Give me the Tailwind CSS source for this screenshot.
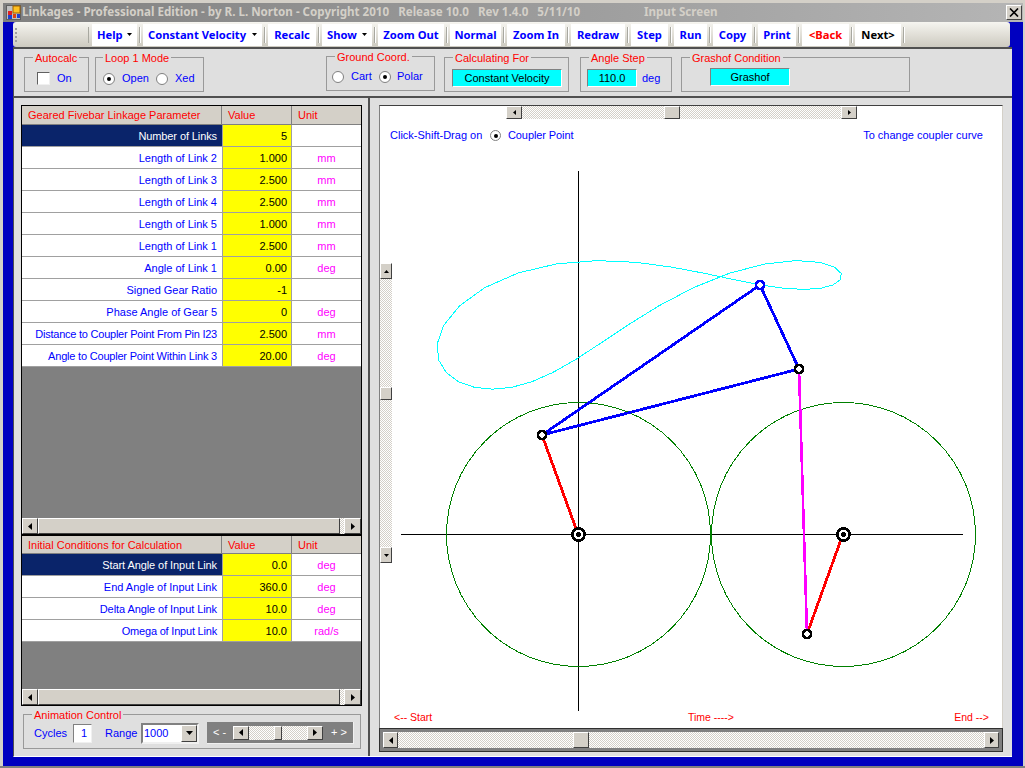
<!DOCTYPE html>
<html>
<head>
<meta charset="utf-8">
<script src="https://cdn.jsdelivr.net/npm/@tailwindcss/browser@4"></script>
</head>
<body class="m-0">
<div class="w-[1025px] h-[768px] overflow-hidden bg-[#d4d0c8] pt-[3px] pl-[3px] pr-[2px] flex flex-col font-['Liberation_Sans',sans-serif] text-[11px] leading-[13px] border-b-2 border-[#808080]">
  <!-- title bar -->
  <div class="h-[19px] shrink-0 flex items-center bg-gradient-to-r from-[#808080] to-[#b5b5b5] text-[#d4d0c8] font-['Noto_Sans',sans-serif] font-bold text-[11.6px] relative">
    <svg class="ml-[3px] mr-[1px]" width="15" height="15" viewBox="0 0 15 15"><rect x="0.5" y="0.5" width="14" height="14" fill="#c0c0c0" stroke="#606060"/><rect x="7" y="1" width="7" height="7" fill="#ffc020" stroke="#a06000"/><rect x="2" y="6" width="4" height="4" fill="#e02020"/><rect x="2" y="10" width="4" height="4" fill="#2040d0"/><rect x="7" y="9" width="3" height="4" fill="#e04010"/><rect x="11" y="9" width="3" height="4" fill="#2040d0"/></svg>
    <span class="whitespace-pre w-[622px] pb-[2px]">Linkages - Professional Edition - by R. L. Norton - Copyright 2010   Release 10.0   Rev 1.4.0   5/11/10</span>
    <span class="whitespace-pre pb-[2px]">Input Screen</span>
    <div class="ml-auto mr-[1px] w-[16px] h-[15px] bg-[#d4d0c8] border border-t-white border-l-white border-r-[#404040] border-b-[#404040] flex items-center justify-center">
      <svg width="10" height="9" viewBox="0 0 10 9"><path d="M1 0.5 L9 8.5 M9 0.5 L1 8.5" stroke="#000" stroke-width="1.6"/></svg>
    </div>
  </div>
  <!-- blue frame -->
  <div class="flex-1 bg-[#0000c0] pl-[10px] pr-[11px] pb-[9px] flex flex-col min-h-0">
    <!-- toolbar -->
    <div class="h-[25px] shrink-0 rounded-[3px] bg-gradient-to-b from-[#f6f5f0] to-[#cdcac0] flex items-center font-['Noto_Sans',sans-serif] font-bold text-[11.2px] text-[#0000ff] mr-[2px] whitespace-nowrap">
      <div class="w-[2px] h-[14px] ml-[2px] bg-[repeating-linear-gradient(#a0a0a0_0_2px,transparent_2px_4px)]"></div>
      <div class="w-[71px]"></div>
      <div class="w-[1px] h-[16px] bg-[#a8a8a0] mr-[3px]"></div>
      <div class="w-[45px] h-[22px] bg-white flex items-center pl-[5px]">Help<svg class="ml-auto mr-[5px]" width="5" height="3"><path d="M0 0H5L2.5 3Z" fill="#000"/></svg></div>
      <div class="w-[2px] h-[16px] mx-[2px] bg-[#a8a8a0] border-r border-white"></div>
      <div class="w-[119px] h-[22px] bg-white flex items-center pl-[5px]">Constant Velocity<svg class="ml-auto mr-[5px]" width="5" height="3"><path d="M0 0H5L2.5 3Z" fill="#000"/></svg></div>
      <div class="w-[2px] h-[16px] mx-[2px] bg-[#a8a8a0] border-r border-white"></div>
      <div class="w-[48px] h-[22px] bg-white flex items-center justify-center">Recalc</div>
      <div class="w-[2px] h-[16px] mx-[2px] bg-[#a8a8a0] border-r border-white"></div>
      <div class="w-[50px] h-[22px] bg-white flex items-center pl-[5px]">Show<svg class="ml-auto mr-[5px]" width="5" height="3"><path d="M0 0H5L2.5 3Z" fill="#000"/></svg></div>
      <div class="w-[2px] h-[16px] mx-[2px] bg-[#a8a8a0] border-r border-white"></div>
      <div class="w-[66px] h-[22px] bg-white flex items-center justify-center">Zoom Out</div>
      <div class="w-[2px] h-[16px] mx-[2px] bg-[#a8a8a0] border-r border-white"></div>
      <div class="w-[51px] h-[22px] bg-white flex items-center justify-center">Normal</div>
      <div class="w-[2px] h-[16px] mx-[2px] bg-[#a8a8a0] border-r border-white"></div>
      <div class="w-[58px] h-[22px] bg-white flex items-center justify-center">Zoom In</div>
      <div class="w-[2px] h-[16px] mx-[2px] bg-[#a8a8a0] border-r border-white"></div>
      <div class="w-[54px] h-[22px] bg-white flex items-center justify-center">Redraw</div>
      <div class="w-[2px] h-[16px] mx-[2px] bg-[#a8a8a0] border-r border-white"></div>
      <div class="w-[37px] h-[22px] bg-white flex items-center justify-center">Step</div>
      <div class="w-[2px] h-[16px] mx-[2px] bg-[#a8a8a0] border-r border-white"></div>
      <div class="w-[33px] h-[22px] bg-white flex items-center justify-center">Run</div>
      <div class="w-[2px] h-[16px] mx-[2px] bg-[#a8a8a0] border-r border-white"></div>
      <div class="w-[39px] h-[22px] bg-white flex items-center justify-center">Copy</div>
      <div class="w-[2px] h-[16px] mx-[2px] bg-[#a8a8a0] border-r border-white"></div>
      <div class="w-[38px] h-[22px] bg-white flex items-center justify-center">Print</div>
      <div class="w-[2px] h-[16px] mx-[2px] bg-[#a8a8a0] border-r border-white"></div>
      <div class="w-[47px] h-[22px] bg-white flex items-center justify-center text-[#ff0000]">&lt;Back</div>
      <div class="w-[2px] h-[16px] mx-[2px] bg-[#a8a8a0] border-r border-white"></div>
      <div class="w-[46px] h-[22px] bg-white flex items-center justify-center text-black">Next&gt;</div>
      <div class="w-[2px] h-[16px] mx-[2px] bg-[#a8a8a0] border-r border-white"></div>
    </div>
    <!-- content -->
    <div class="flex-1 min-h-0 bg-[#dfdfdf] border-t-2 border-t-[#505050] border-l border-l-[#505050] border-b border-b-white flex flex-col">
      <!-- control row -->
      <div class="h-[49px] shrink-0 border-b-2 border-b-[#505050] pt-[2px] pl-[10px] flex items-start text-[#0000ff]">
        <fieldset class="w-[65px] h-[41px] border border-[#999999]">
          <legend class="ml-[8px] px-[2px] text-[#ff0000] translate-y-[1px]">Autocalc</legend>
          <div class="flex items-center pl-[12px] pt-[8px]">
            <span class="w-[13px] h-[13px] bg-white border border-t-[#606060] border-l-[#606060] border-r-[#f0f0f0] border-b-[#f0f0f0]"></span>
            <span class="ml-[7px]">On</span>
          </div>
        </fieldset>
        <fieldset class="ml-[6px] w-[109px] h-[41px] border border-[#999999]">
          <legend class="ml-[7px] px-[2px] text-[#ff0000] translate-y-[1px]">Loop 1 Mode</legend>
          <div class="flex items-center pl-[7px] pt-[8px]">
            <span class="w-[12px] h-[12px] rounded-full bg-white border border-[#808080] flex items-center justify-center"><span class="w-[4px] h-[4px] rounded-full bg-black"></span></span>
            <span class="ml-[7px] w-[28px]">Open</span>
            <span class="ml-[6px] w-[12px] h-[12px] rounded-full bg-white border border-[#808080]"></span>
            <span class="ml-[7px]">Xed</span>
          </div>
        </fieldset>
        <fieldset class="ml-[122px] -mt-[1px] w-[109px] h-[41px] border border-[#999999]">
          <legend class="ml-[8px] px-[2px] text-[#ff0000] translate-y-[1px]">Ground Coord.</legend>
          <div class="flex items-center pl-[5px] pt-[7px]">
            <span class="w-[12px] h-[12px] rounded-full bg-white border border-[#808080]"></span>
            <span class="ml-[7px] w-[21px]">Cart</span>
            <span class="ml-[7px] w-[12px] h-[12px] rounded-full bg-white border border-[#808080] flex items-center justify-center"><span class="w-[4px] h-[4px] rounded-full bg-black"></span></span>
            <span class="ml-[6px]">Polar</span>
          </div>
        </fieldset>
        <fieldset class="ml-[9px] w-[125px] h-[41px] border border-[#999999]">
          <legend class="ml-[8px] px-[2px] text-[#ff0000] translate-y-[1px]">Calculating For</legend>
          <div class="pl-[7px] pt-[5px]">
            <div class="w-[110px] h-[18px] bg-[#00ffff] border border-t-[#808080] border-l-[#808080] border-r-white border-b-white flex items-center justify-center text-black">Constant Velocity</div>
          </div>
        </fieldset>
        <fieldset class="ml-[11px] w-[92px] h-[41px] border border-[#999999]">
          <legend class="ml-[8px] px-[2px] text-[#ff0000] translate-y-[1px]">Angle Step</legend>
          <div class="pl-[6px] pt-[5px] flex items-center">
            <div class="w-[50px] h-[18px] bg-[#00ffff] border border-t-[#808080] border-l-[#808080] border-r-white border-b-white flex items-center justify-center text-black">110.0</div>
            <span class="ml-[5px]">deg</span>
          </div>
        </fieldset>
        <fieldset class="ml-[9px] w-[229px] h-[41px] border border-[#999999]">
          <legend class="ml-[8px] px-[2px] text-[#ff0000] translate-y-[1px]">Grashof Condition</legend>
          <div class="pl-[28px] pt-[4px]">
            <div class="w-[80px] h-[18px] bg-[#00ffff] border border-t-[#808080] border-l-[#808080] border-r-white border-b-white flex items-center justify-center text-black">Grashof</div>
          </div>
        </fieldset>
      </div>
      <!-- main area -->
      <div class="flex-1 min-h-0 flex">
        <!-- left panel -->
        <div class="w-[356px] shrink-0 border-r-2 border-r-[#505050] pl-[7px] pt-[7px] flex flex-col">
          <!-- grid 1 -->
          <div class="w-[341px] h-[430px] bg-[#808080] border border-black flex flex-col">
            <div class="h-[19px] shrink-0 bg-[#d4d0c8] flex text-[#ff0000] border-b border-b-[#808080]">
              <div class="w-[200px] border-r border-r-[#808080] pl-[6px] pt-[3px]">Geared Fivebar Linkage Parameter</div>
              <div class="w-[70px] border-r border-r-[#808080] pl-[6px] pt-[3px]">Value</div>
              <div class="flex-1 pl-[6px] pt-[3px]">Unit</div>
            </div>
            <div class="h-[22px] shrink-0 flex border-b border-b-[#a0a0a0]"><div class="w-[200px] bg-[#0a246a] text-white text-right pr-[5px] pt-[5px] tracking-[-0.1px]">Number of Links</div><div class="w-[70px] bg-[#ffff00] border-l border-r border-[#a0a0a0] text-right pr-[4px] pt-[5px] text-black">5</div><div class="flex-1 bg-white text-center pt-[5px] text-[#ff00ff]"></div></div>
            <div class="h-[22px] shrink-0 flex border-b border-b-[#a0a0a0]"><div class="w-[200px] bg-white text-[#0000ff] text-right pr-[5px] pt-[5px]">Length of Link 2</div><div class="w-[70px] bg-[#ffff00] border-l border-r border-[#a0a0a0] text-right pr-[4px] pt-[5px] text-black">1.000</div><div class="flex-1 bg-white text-center pt-[5px] text-[#ff00ff]">mm</div></div>
            <div class="h-[22px] shrink-0 flex border-b border-b-[#a0a0a0]"><div class="w-[200px] bg-white text-[#0000ff] text-right pr-[5px] pt-[5px]">Length of Link 3</div><div class="w-[70px] bg-[#ffff00] border-l border-r border-[#a0a0a0] text-right pr-[4px] pt-[5px] text-black">2.500</div><div class="flex-1 bg-white text-center pt-[5px] text-[#ff00ff]">mm</div></div>
            <div class="h-[22px] shrink-0 flex border-b border-b-[#a0a0a0]"><div class="w-[200px] bg-white text-[#0000ff] text-right pr-[5px] pt-[5px]">Length of Link 4</div><div class="w-[70px] bg-[#ffff00] border-l border-r border-[#a0a0a0] text-right pr-[4px] pt-[5px] text-black">2.500</div><div class="flex-1 bg-white text-center pt-[5px] text-[#ff00ff]">mm</div></div>
            <div class="h-[22px] shrink-0 flex border-b border-b-[#a0a0a0]"><div class="w-[200px] bg-white text-[#0000ff] text-right pr-[5px] pt-[5px]">Length of Link 5</div><div class="w-[70px] bg-[#ffff00] border-l border-r border-[#a0a0a0] text-right pr-[4px] pt-[5px] text-black">1.000</div><div class="flex-1 bg-white text-center pt-[5px] text-[#ff00ff]">mm</div></div>
            <div class="h-[22px] shrink-0 flex border-b border-b-[#a0a0a0]"><div class="w-[200px] bg-white text-[#0000ff] text-right pr-[5px] pt-[5px]">Length of Link 1</div><div class="w-[70px] bg-[#ffff00] border-l border-r border-[#a0a0a0] text-right pr-[4px] pt-[5px] text-black">2.500</div><div class="flex-1 bg-white text-center pt-[5px] text-[#ff00ff]">mm</div></div>
            <div class="h-[22px] shrink-0 flex border-b border-b-[#a0a0a0]"><div class="w-[200px] bg-white text-[#0000ff] text-right pr-[5px] pt-[5px]">Angle of Link 1</div><div class="w-[70px] bg-[#ffff00] border-l border-r border-[#a0a0a0] text-right pr-[4px] pt-[5px] text-black">0.00</div><div class="flex-1 bg-white text-center pt-[5px] text-[#ff00ff]">deg</div></div>
            <div class="h-[22px] shrink-0 flex border-b border-b-[#a0a0a0]"><div class="w-[200px] bg-white text-[#0000ff] text-right pr-[5px] pt-[5px]">Signed Gear Ratio</div><div class="w-[70px] bg-[#ffff00] border-l border-r border-[#a0a0a0] text-right pr-[4px] pt-[5px] text-black">-1</div><div class="flex-1 bg-white text-center pt-[5px] text-[#ff00ff]"></div></div>
            <div class="h-[22px] shrink-0 flex border-b border-b-[#a0a0a0]"><div class="w-[200px] bg-white text-[#0000ff] text-right pr-[5px] pt-[5px]">Phase Angle of Gear 5</div><div class="w-[70px] bg-[#ffff00] border-l border-r border-[#a0a0a0] text-right pr-[4px] pt-[5px] text-black">0</div><div class="flex-1 bg-white text-center pt-[5px] text-[#ff00ff]">deg</div></div>
            <div class="h-[22px] shrink-0 flex border-b border-b-[#a0a0a0]"><div class="w-[200px] bg-white text-[#0000ff] text-right pr-[5px] pt-[5px] tracking-[-0.24px]">Distance to Coupler Point From Pin I23</div><div class="w-[70px] bg-[#ffff00] border-l border-r border-[#a0a0a0] text-right pr-[4px] pt-[5px] text-black">2.500</div><div class="flex-1 bg-white text-center pt-[5px] text-[#ff00ff]">mm</div></div>
            <div class="h-[22px] shrink-0 flex border-b border-b-[#a0a0a0]"><div class="w-[200px] bg-white text-[#0000ff] text-right pr-[5px] pt-[5px] tracking-[-0.2px]">Angle to Coupler Point Within Link 3</div><div class="w-[70px] bg-[#ffff00] border-l border-r border-[#a0a0a0] text-right pr-[4px] pt-[5px] text-black">20.00</div><div class="flex-1 bg-white text-center pt-[5px] text-[#ff00ff]">deg</div></div>
            <div class="flex-1"></div>
            <div class="h-[16px] shrink-0 flex bg-[#d4d0c8]">
              <div class="w-[16px] bg-[#d4d0c8] border border-t-white border-l-white border-r-[#404040] border-b-[#404040] flex items-center justify-center"><svg width="4" height="7"><path d="M4 0V7L0 3.5Z" fill="#000"/></svg></div>
              <div class="w-[302px] bg-[#d4d0c8] border border-t-white border-l-white border-r-[#404040] border-b-[#404040]"></div>
              <div class="w-[4px] bg-[repeating-conic-gradient(#d4d0c8_0_25%,#fff_0_50%)] bg-[length:2px_2px]"></div>
              <div class="flex-1 bg-[#d4d0c8] border border-t-white border-l-white border-r-[#404040] border-b-[#404040] flex items-center justify-center"><svg width="4" height="7"><path d="M0 0V7L4 3.5Z" fill="#000"/></svg></div>
            </div>
          </div>
          <!-- grid 2 -->
          <div class="w-[341px] h-[171px] bg-[#808080] border border-black flex flex-col">
            <div class="h-[18px] shrink-0 bg-[#d4d0c8] flex text-[#ff0000] border-b border-b-[#808080]">
              <div class="w-[200px] border-r border-r-[#808080] pl-[6px] pt-[3px]">Initial Conditions for Calculation</div>
              <div class="w-[70px] border-r border-r-[#808080] pl-[6px] pt-[3px]">Value</div>
              <div class="flex-1 pl-[6px] pt-[3px]">Unit</div>
            </div>
            <div class="h-[22px] shrink-0 flex border-b border-b-[#a0a0a0]"><div class="w-[200px] bg-[#0a246a] text-white text-right pr-[5px] pt-[5px] tracking-[-0.08px]">Start Angle of Input Link</div><div class="w-[70px] bg-[#ffff00] border-l border-r border-[#a0a0a0] text-right pr-[4px] pt-[5px] text-black">0.0</div><div class="flex-1 bg-white text-center pt-[5px] text-[#ff00ff]">deg</div></div>
            <div class="h-[22px] shrink-0 flex border-b border-b-[#a0a0a0]"><div class="w-[200px] bg-white text-[#0000ff] text-right pr-[5px] pt-[5px]">End Angle of Input Link</div><div class="w-[70px] bg-[#ffff00] border-l border-r border-[#a0a0a0] text-right pr-[4px] pt-[5px] text-black">360.0</div><div class="flex-1 bg-white text-center pt-[5px] text-[#ff00ff]">deg</div></div>
            <div class="h-[22px] shrink-0 flex border-b border-b-[#a0a0a0]"><div class="w-[200px] bg-white text-[#0000ff] text-right pr-[5px] pt-[5px] tracking-[-0.08px]">Delta Angle of Input Link</div><div class="w-[70px] bg-[#ffff00] border-l border-r border-[#a0a0a0] text-right pr-[4px] pt-[5px] text-black">10.0</div><div class="flex-1 bg-white text-center pt-[5px] text-[#ff00ff]">deg</div></div>
            <div class="h-[22px] shrink-0 flex border-b border-b-[#a0a0a0]"><div class="w-[200px] bg-white text-[#0000ff] text-right pr-[5px] pt-[5px] tracking-[-0.2px]">Omega of Input Link</div><div class="w-[70px] bg-[#ffff00] border-l border-r border-[#a0a0a0] text-right pr-[4px] pt-[5px] text-black">10.0</div><div class="flex-1 bg-white text-center pt-[5px] text-[#ff00ff]">rad/s</div></div>
            <div class="flex-1"></div>
            <div class="h-[16px] shrink-0 flex bg-[#d4d0c8]">
              <div class="w-[16px] bg-[#d4d0c8] border border-t-white border-l-white border-r-[#404040] border-b-[#404040] flex items-center justify-center"><svg width="4" height="7"><path d="M4 0V7L0 3.5Z" fill="#000"/></svg></div>
              <div class="w-[302px] bg-[#d4d0c8] border border-t-white border-l-white border-r-[#404040] border-b-[#404040]"></div>
              <div class="w-[4px] bg-[repeating-conic-gradient(#d4d0c8_0_25%,#fff_0_50%)] bg-[length:2px_2px]"></div>
              <div class="flex-1 bg-[#d4d0c8] border border-t-white border-l-white border-r-[#404040] border-b-[#404040] flex items-center justify-center"><svg width="4" height="7"><path d="M0 0V7L4 3.5Z" fill="#000"/></svg></div>
            </div>
          </div>
          <!-- animation control -->
          <fieldset class="ml-[2px] mt-[2px] w-[338px] h-[41px] border border-[#999999] text-[#0000ff]">
            <legend class="ml-[8px] px-[2px] text-[#ff0000] translate-y-[1px]">Animation Control</legend>
            <div class="flex items-center pl-[10px] mt-[1px] h-[22px]">
              <span class="w-[39px]">Cycles</span>
              <div class="w-[19px] h-[19px] bg-white border border-t-[#808080] border-l-[#808080] border-r-[#f0f0f0] border-b-[#f0f0f0] text-right pr-[4px] pt-[2px]">1</div>
              <span class="ml-[13px] w-[36px]">Range</span>
              <div class="w-[58px] h-[21px] bg-white border-2 border-t-[#808080] border-l-[#808080] border-r-[#f0f0f0] border-b-[#f0f0f0] flex">
                <span class="flex-1 pl-[1px] pt-[2px]">1000</span>
                <div class="w-[16px] bg-[#d4d0c8] border border-t-white border-l-white border-r-[#404040] border-b-[#404040] flex items-center justify-center"><svg width="7" height="4"><path d="M0 0H7L3.5 4Z" fill="#000"/></svg></div>
              </div>
              <div class="ml-[8px] w-[147px] h-[22px] bg-[#808080] border-b border-r border-[#f0f0f0] flex items-center text-white">
                <span class="w-[26px] pl-[6px] whitespace-pre">&lt; -</span>
                <div class="w-[90px] h-[14px] flex bg-[repeating-conic-gradient(#d4d0c8_0_25%,#fff_0_50%)] bg-[length:2px_2px]">
                  <div class="w-[16px] bg-[#d4d0c8] border border-t-white border-l-white border-r-[#404040] border-b-[#404040] flex items-center justify-center"><svg width="4" height="7"><path d="M4 0V7L0 3.5Z" fill="#000"/></svg></div>
                  <div class="ml-[25px] w-[8px] bg-[#d4d0c8] border border-t-white border-l-white border-r-[#404040] border-b-[#404040]"></div>
                  <div class="ml-auto w-[16px] bg-[#d4d0c8] border border-t-white border-l-white border-r-[#404040] border-b-[#404040] flex items-center justify-center"><svg width="4" height="7"><path d="M0 0V7L4 3.5Z" fill="#000"/></svg></div>
                </div>
                <span class="ml-[8px] whitespace-pre">+ &gt;</span>
              </div>
            </div>
          </fieldset>
        </div>
        <!-- right panel -->
        <div class="flex-1 pl-[9px] pt-[7px] min-w-0">
          <div class="w-[624px] h-[623px] relative bg-white border-t border-t-[#404040] border-l border-l-[#808080] border-r border-r-[#d4d0c8] overflow-hidden">
            <svg class="absolute left-0 top-0" width="624" height="623" viewBox="380 106 624 623" shape-rendering="crispEdges">
              <line x1="578.5" y1="171" x2="578.5" y2="711" stroke="#000" stroke-width="1"/>
              <line x1="401" y1="534.5" x2="963" y2="534.5" stroke="#000" stroke-width="1"/>
              <circle cx="578.5" cy="534.5" r="132" fill="none" stroke="#008000" stroke-width="1"/>
              <circle cx="843.5" cy="534.5" r="132" fill="none" stroke="#008000" stroke-width="1"/>
              <polyline id="curve" fill="none" stroke="#00ffff" stroke-width="1" points="" />
              <line x1="578" y1="534" x2="542" y2="435" stroke="#ff0000" stroke-width="2.8"/>
              <line x1="843" y1="534" x2="807" y2="634" stroke="#ff0000" stroke-width="2.8"/>
              <line x1="807" y1="634" x2="799" y2="369" stroke="#ff00ff" stroke-width="2.6"/>
              <line x1="542" y1="435" x2="799" y2="369" stroke="#0000ff" stroke-width="2.8"/>
              <line x1="542" y1="435" x2="760" y2="285" stroke="#0000ff" stroke-width="2.8"/>
              <line x1="760" y1="285" x2="799" y2="369" stroke="#0000ff" stroke-width="2.8"/>
              <circle cx="542" cy="435" r="4" fill="#fff" stroke="#000" stroke-width="2.8"/>
              <circle cx="799" cy="369" r="4" fill="#fff" stroke="#000" stroke-width="2.8"/>
              <circle cx="807" cy="634" r="4" fill="#fff" stroke="#000" stroke-width="2.8"/>
              <circle cx="760" cy="285" r="4" fill="#fff" stroke="#0000ff" stroke-width="2.8"/>
              <circle cx="578.5" cy="534.5" r="6" fill="#fff" stroke="#000" stroke-width="2.8"/>
              <circle cx="578.5" cy="534.5" r="2.5" fill="#000"/>
              <circle cx="843.5" cy="534.5" r="6" fill="#fff" stroke="#000" stroke-width="2.8"/>
              <circle cx="843.5" cy="534.5" r="2.5" fill="#000"/>
            </svg>
            <!-- overlay scrollbars -->
            <div class="absolute left-[126px] top-[0px] w-[351px] h-[13px] flex bg-[repeating-conic-gradient(#d4d0c8_0_25%,#fff_0_50%)] bg-[length:2px_2px]">
              <div class="w-[16px] bg-[#d4d0c8] border border-t-white border-l-white border-r-[#404040] border-b-[#404040] flex items-center justify-center"><svg width="3" height="5"><path d="M3 0V5L0 2.5Z" fill="#000"/></svg></div>
              <div class="ml-[142px] w-[16px] bg-[#d4d0c8] border border-t-white border-l-white border-r-[#404040] border-b-[#404040]"></div>
              <div class="ml-auto w-[16px] bg-[#d4d0c8] border border-t-white border-l-white border-r-[#404040] border-b-[#404040] flex items-center justify-center"><svg width="3" height="5"><path d="M0 0V5L3 2.5Z" fill="#000"/></svg></div>
            </div>
            <div class="absolute left-[0px] top-[157px] w-[12px] h-[300px] flex flex-col bg-[repeating-conic-gradient(#d4d0c8_0_25%,#fff_0_50%)] bg-[length:2px_2px]">
              <div class="h-[16px] bg-[#d4d0c8] border border-t-white border-l-white border-r-[#404040] border-b-[#404040] flex items-center justify-center"><svg width="5" height="3"><path d="M0 3H5L2.5 0Z" fill="#000"/></svg></div>
              <div class="mt-[108px] h-[13px] bg-[#d4d0c8] border border-t-white border-l-white border-r-[#404040] border-b-[#404040]"></div>
              <div class="mt-auto h-[16px] bg-[#d4d0c8] border border-t-white border-l-white border-r-[#404040] border-b-[#404040] flex items-center justify-center"><svg width="5" height="3"><path d="M0 0H5L2.5 3Z" fill="#000"/></svg></div>
            </div>
            <!-- canvas labels -->
            <div class="absolute left-[10px] top-[23px] flex items-center text-[#0000ff]">
              <span class="w-[100px]">Click-Shift-Drag on</span>
              <span class="w-[11px] h-[11px] rounded-full bg-white border border-[#808080] flex items-center justify-center"><span class="w-[4px] h-[4px] rounded-full bg-black"></span></span>
              <span class="ml-[7px] tracking-[-0.1px]">Coupler Point</span>
            </div>
            <div class="absolute right-[19px] top-[23px] text-[#0000ff]">To change coupler curve</div>
            <div class="absolute left-[14px] top-[605px] text-[#ff0000] text-[10.5px]">&lt;-- Start</div>
            <div class="absolute left-[308px] top-[605px] text-[#ff0000] text-[10.5px]">Time ----&gt;</div>
            <div class="absolute right-[13px] top-[605px] text-[#ff0000] text-[10.5px]">End --&gt;</div>
          </div>
          <div class="w-[624px] h-[24px] bg-[#808080] border border-[#303030] px-[3px] py-[3px]">
            <div class="h-[16px] flex bg-[repeating-conic-gradient(#d4d0c8_0_25%,#fff_0_50%)] bg-[length:2px_2px]">
              <div class="w-[15px] bg-[#d4d0c8] border border-t-white border-l-white border-r-[#404040] border-b-[#404040] flex items-center justify-center"><svg width="4" height="7"><path d="M4 0V7L0 3.5Z" fill="#000"/></svg></div>
              <div class="ml-[175px] w-[16px] bg-[#d4d0c8] border border-t-white border-l-white border-r-[#404040] border-b-[#404040]"></div>
              <div class="ml-auto w-[15px] bg-[#d4d0c8] border border-t-white border-l-white border-r-[#404040] border-b-[#404040] flex items-center justify-center"><svg width="4" height="7"><path d="M0 0V7L4 3.5Z" fill="#000"/></svg></div>
            </div>
          </div>
        </div>
      </div>
    </div>
  </div>
</div>
<script>
  var pts = [], L = 265, r = 106, c = Math.cos(20 * Math.PI / 180), s = Math.sin(20 * Math.PI / 180);
  for (var d = 0; d <= 360; d += 10) {
    var t = d * Math.PI / 180;
    var ax = 578 + r * Math.cos(t), ay = 534 - r * Math.sin(t);
    var cx = 843 + r * Math.cos(t), cy = 534 + r * Math.sin(t);
    var dx = cx - ax, dy = cy - ay, q = Math.sqrt(dx * dx + dy * dy);
    var h = Math.sqrt(L * L - q * q / 4);
    var bx = (ax + cx) / 2 + h * dy / q, by = (ay + cy) / 2 - h * dx / q;
    var ux = bx - ax, uy = by - ay;
    pts.push((ax + ux * c + uy * s).toFixed(1) + ',' + (ay - ux * s + uy * c).toFixed(1));
  }
  document.getElementById('curve').setAttribute('points', pts.join(' '));
</script>
</body>
</html>
